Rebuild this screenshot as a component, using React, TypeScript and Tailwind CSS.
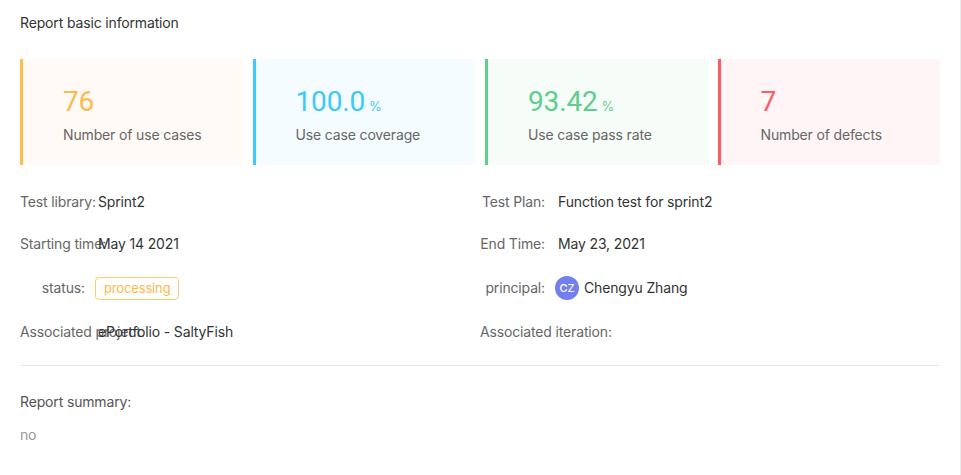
const font = { fontFamily: 'Inter, "Noto Sans", sans-serif' }

type Stat = {
  value: string
  unit?: string
  label: string
  border: string
  bg: string
  color: string
}

const stats: Stat[] = [
  { value: "76", label: "Number of use cases", border: "border-[#ffbd4e]", bg: "bg-[#fffaf5]", color: "text-[#ffb94f]" },
  { value: "100.0", unit: "%", label: "Use case coverage", border: "border-[#3ccaff]", bg: "bg-[#f4fcff]", color: "text-[#3dc8fb]" },
  { value: "93.42", unit: "%", label: "Use case pass rate", border: "border-[#5dd08f]", bg: "bg-[#f6fcf8]", color: "text-[#5ccf8e]" },
  { value: "7", label: "Number of defects", border: "border-[#ff5a5f]", bg: "bg-[#fff5f6]", color: "text-[#fd5c62]" },
]

function StatCard({ s }: { s: Stat }) {
  return (
    <div className={`h-[106px] border-l-[3px] rounded-r ${s.border} ${s.bg} pl-[40px] pt-[25px]`}>
      <div className={`flex items-baseline ${s.color}`}>
        <span className="text-[28px] leading-[36px]" style={{ fontFamily: 'Roboto, "DejaVu Sans", sans-serif' }}>
          {s.value}
        </span>
        {s.unit && <span className="ml-1 text-[13px]">{s.unit}</span>}
      </div>
      <div className="mt-1 text-[14px] leading-[22px] text-[#666]">{s.label}</div>
    </div>
  )
}

function Row({ label, children, h = "h-[22px]" }: { label: string; children: React.ReactNode; h?: string }) {
  return (
    <div className={`flex items-center ${h} text-[14px] leading-[22px]`}>
      <span className="w-[65px] shrink-0 whitespace-nowrap text-right text-[#666]">{label}</span>
      {children}
    </div>
  )
}

export default function App() {
  return (
    <div className="w-full h-[475px] bg-white border-r border-[#ebebeb] px-5 pt-3 tracking-[-0.15px]" style={font}>
      <h1 className="text-[14px] leading-[22px] text-[#333]">Report basic information</h1>

      <div className="mt-[25px] grid grid-cols-4 gap-[10px]">
        {stats.map((s) => (
          <StatCard key={s.label} s={s} />
        ))}
      </div>

      <div className="mt-[26px] grid grid-cols-2 gap-y-5">
        <Row label="Test library:">
          <span className="ml-[13px] text-[#333]">Sprint2</span>
        </Row>
        <Row label="Test Plan:">
          <span className="ml-[13px] text-[#333]">Function test for sprint2</span>
        </Row>
        <Row label="Starting time:">
          <span className="ml-[13px] text-[#333]">May 14 2021</span>
        </Row>
        <Row label="End Time:">
          <span className="ml-[13px] text-[#333]">May 23, 2021</span>
        </Row>
        <Row label="status:" h="h-[26px]">
          <span className="ml-[10px] h-[23px] px-[8px] border border-[#ffcd6b] rounded-sm text-[13px] leading-[21px] text-[#ffb84d]">
            processing
          </span>
        </Row>
        <Row label="principal:" h="h-[26px]">
          <span className="ml-[10px] flex items-center">
            <span className="w-6 h-6 rounded-full bg-[#737fee] text-white text-[11px] font-medium flex items-center justify-center">
              CZ
            </span>
            <span className="ml-[5px] text-[#333]">Chengyu Zhang</span>
          </span>
        </Row>
        <Row label="Associated project:">
          <span className="ml-[13px] text-[#333]">ePortfolio - SaltyFish</span>
        </Row>
        <Row label="Associated iteration:">
          <span className="ml-[13px] text-[#333]"></span>
        </Row>
      </div>

      <div className="mt-[22px] border-t border-[#e8e8e8]" />

      <div className="mt-[25px] text-[14px] leading-[22px] text-[#555]">Report summary:</div>
      <div className="mt-[11px] text-[14px] leading-[22px] text-[#999]">no</div>
    </div>
  )
}
